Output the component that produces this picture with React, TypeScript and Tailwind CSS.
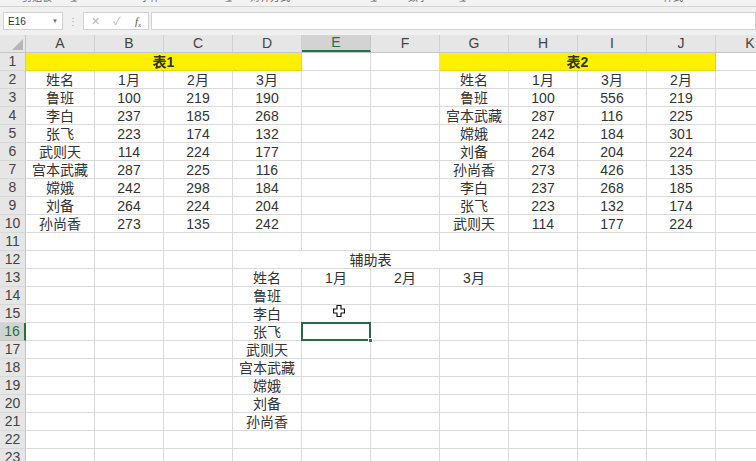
import React from "react";

type Cell = { t?: string; span?: number; yellow?: boolean; bold?: boolean };

const COLS = ["A", "B", "C", "D", "E", "F", "G", "H", "I", "J", "K"];

const t1: string[][] = [
  ["姓名", "1月", "2月", "3月"],
  ["鲁班", "100", "219", "190"],
  ["李白", "237", "185", "268"],
  ["张飞", "223", "174", "132"],
  ["武则天", "114", "224", "177"],
  ["宫本武藏", "287", "225", "116"],
  ["嫦娥", "242", "298", "184"],
  ["刘备", "264", "224", "204"],
  ["孙尚香", "273", "135", "242"],
];
const t2: string[][] = [
  ["姓名", "1月", "3月", "2月"],
  ["鲁班", "100", "556", "219"],
  ["宫本武藏", "287", "116", "225"],
  ["嫦娥", "242", "184", "301"],
  ["刘备", "264", "204", "224"],
  ["孙尚香", "273", "426", "135"],
  ["李白", "237", "268", "185"],
  ["张飞", "223", "132", "174"],
  ["武则天", "114", "177", "224"],
];
const aux = ["鲁班", "李白", "张飞", "武则天", "宫本武藏", "嫦娥", "刘备", "孙尚香"];

function buildRow(r: number): Cell[] {
  if (r === 1) {
    return [
      { t: "表1", span: 4, yellow: true, bold: true },
      {},
      {},
      { t: "表2", span: 4, yellow: true, bold: true },
      {},
    ];
  }
  if (r === 12) {
    return [{}, {}, {}, { t: "辅助表", span: 4 }, {}, {}, {}, {}];
  }
  const row: string[] = Array(11).fill("");
  if (r >= 2 && r <= 10) {
    const a = t1[r - 2];
    const b = t2[r - 2];
    for (let i = 0; i < 4; i++) {
      row[i] = a[i];
      row[6 + i] = b[i];
    }
  }
  if (r === 13) {
    row[3] = "姓名";
    row[4] = "1月";
    row[5] = "2月";
    row[6] = "3月";
  }
  if (r >= 14 && r <= 21) row[3] = aux[r - 14];
  return row.map((t) => ({ t }));
}

const font = "font-['Liberation_Sans','Noto_Sans_CJK_SC',sans-serif]";

function CursorPlus() {
  return (
    <svg width="12" height="12" viewBox="0 0 12 12" className="absolute left-[31px] top-[0px]">
      <path
        d="M4 0.5 H8 V4 H11.5 V8 H8 V11.5 H4 V8 H0.5 V4 H4 Z"
        fill="#ffffff"
        stroke="#111"
        strokeWidth="1.2"
        strokeLinejoin="round"
      />
    </svg>
  );
}

export default function App() {
  const rows = Array.from({ length: 23 }, (_, i) => i + 1);
  return (
    <div className={`w-[756px] h-[461px] overflow-hidden bg-white ${font} text-[#333]`}>
      {/* ribbon bottom strip */}
      <div className="h-[7px] bg-[#f3f3f3] border-b border-[#d5d5d5] overflow-hidden relative flex text-[10px] text-[#666] leading-[10px]">
        <div className="w-[22px] shrink-0" />
        <div className="mt-[-7px] w-[48px] shrink-0">剪贴板</div>
        <div className="mt-[-5px] w-[70px] shrink-0 text-[8px]">⇲</div>
        <div className="mt-[-7px] w-[85px] shrink-0">字体</div>
        <div className="mt-[-5px] w-[25px] shrink-0 text-[8px]">⇲</div>
        <div className="mt-[-7px] w-[120px] shrink-0">对齐方式</div>
        <div className="mt-[-5px] w-[38px] shrink-0 text-[8px]">⇲</div>
        <div className="mt-[-7px] w-[51px] shrink-0">数字</div>
        <div className="mt-[-5px] w-[204px] shrink-0 text-[8px]">⇲</div>
        <div className="mt-[-7px] shrink-0">样式</div>
      </div>
      {/* formula bar */}
      <div className="h-[28px] bg-[#f0f0f0] flex items-start pt-[5px]">
        <div className="ml-[3px] w-[60px] shrink-0 h-[18px] bg-white border border-[#d2d2d2] flex items-center justify-between px-[4px]">
          <span className="text-[10px] text-[#333]">E16</span>
          <span className="text-[6px] text-[#666]">▼</span>
        </div>
        <div className="w-[20px] shrink-0 h-[18px] flex items-center justify-center text-[10px] text-[#aaa]">⋮</div>
        <div className="w-[66px] shrink-0 h-[18px] bg-white border border-[#d2d2d2] flex items-center text-[#bbb]">
          <span className="w-[22px] text-center text-[11px]">✕</span>
          <span className="w-[22px] text-center text-[11px]">✓</span>
          <span className="w-[20px] text-center text-[11px] italic font-['Liberation_Serif',serif] text-[#555]">
            f<sub className="text-[7px]">x</sub>
          </span>
        </div>
        <div className="ml-[2px] flex-1 h-[18px] bg-white border border-[#d2d2d2]" />
      </div>
      {/* column headers */}
      <div className="flex h-[18px] bg-[#e6e6e6] border-b border-[#c6c6c6]">
        <div className="w-[26px] shrink-0 h-full border-r border-[#c6c6c6] relative flex items-end justify-end p-[2px]">
          <svg width="11" height="11" viewBox="0 0 11 11">
            <path d="M11 0 L11 11 L0 11 Z" fill="#b5b5b5" />
          </svg>
        </div>
        {COLS.map((c) =>
          c === "E" ? (
            <div
              key={c}
              className="w-[69px] shrink-0 h-full bg-[#d3d3d3] border-r border-[#c6c6c6] border-b-2 border-b-[#217346] flex items-center justify-center text-[14px] text-[#217346]"
            >
              {c}
            </div>
          ) : (
            <div
              key={c}
              className="w-[69px] shrink-0 h-full border-r border-[#d0d0d0] flex items-center justify-center text-[14px] text-[#444]"
            >
              {c}
            </div>
          )
        )}
      </div>
      {/* rows */}
      {rows.map((r) => {
        const cells = buildRow(r);
        return (
          <div key={r} className="flex h-[18px]">
            {r === 16 ? (
              <div className="w-[26px] shrink-0 h-full bg-[#d3d3d3] border-r-2 border-r-[#217346] border-b border-[#c6c6c6] flex items-center justify-center text-[14px] text-[#217346]">
                {r}
              </div>
            ) : (
              <div className="w-[26px] shrink-0 h-full bg-[#e6e6e6] border-r border-[#c6c6c6] border-b border-b-[#d8d8d8] flex items-center justify-center text-[14px] text-[#444]">
                {r}
              </div>
            )}
            {(() => {
              let col = 0;
              return cells.map((cell, i) => {
                const span = cell.span ?? 1;
                const startCol = col;
                col += span;
                const w = span * 69;
                const isSel = r === 16 && startCol === 4;
                const isCursorCell = r === 15 && startCol === 4;
                return (
                  <div
                    key={i}
                    style={{ width: w }}
                    className={`shrink-0 h-full border-r border-b flex items-center justify-center text-[14px] leading-none whitespace-nowrap relative ${
                      cell.yellow ? "bg-[#fff000] border-[#e6d800]" : "border-[#dadada]"
                    } ${cell.bold ? "font-bold text-[#333]" : ""}`}
                  >
                    {cell.t}
                    {isSel && (
                      <div className="absolute left-[-1px] top-[-1px] w-[70px] h-[19px] border-2 border-[#2a6a48] z-10">
                        <div className="absolute right-[-4px] bottom-[-4px] w-[5px] h-[5px] bg-[#217346] border border-white" />
                      </div>
                    )}
                    {isCursorCell && <CursorPlus />}
                  </div>
                );
              });
            })()}
          </div>
        );
      })}
    </div>
  );
}
